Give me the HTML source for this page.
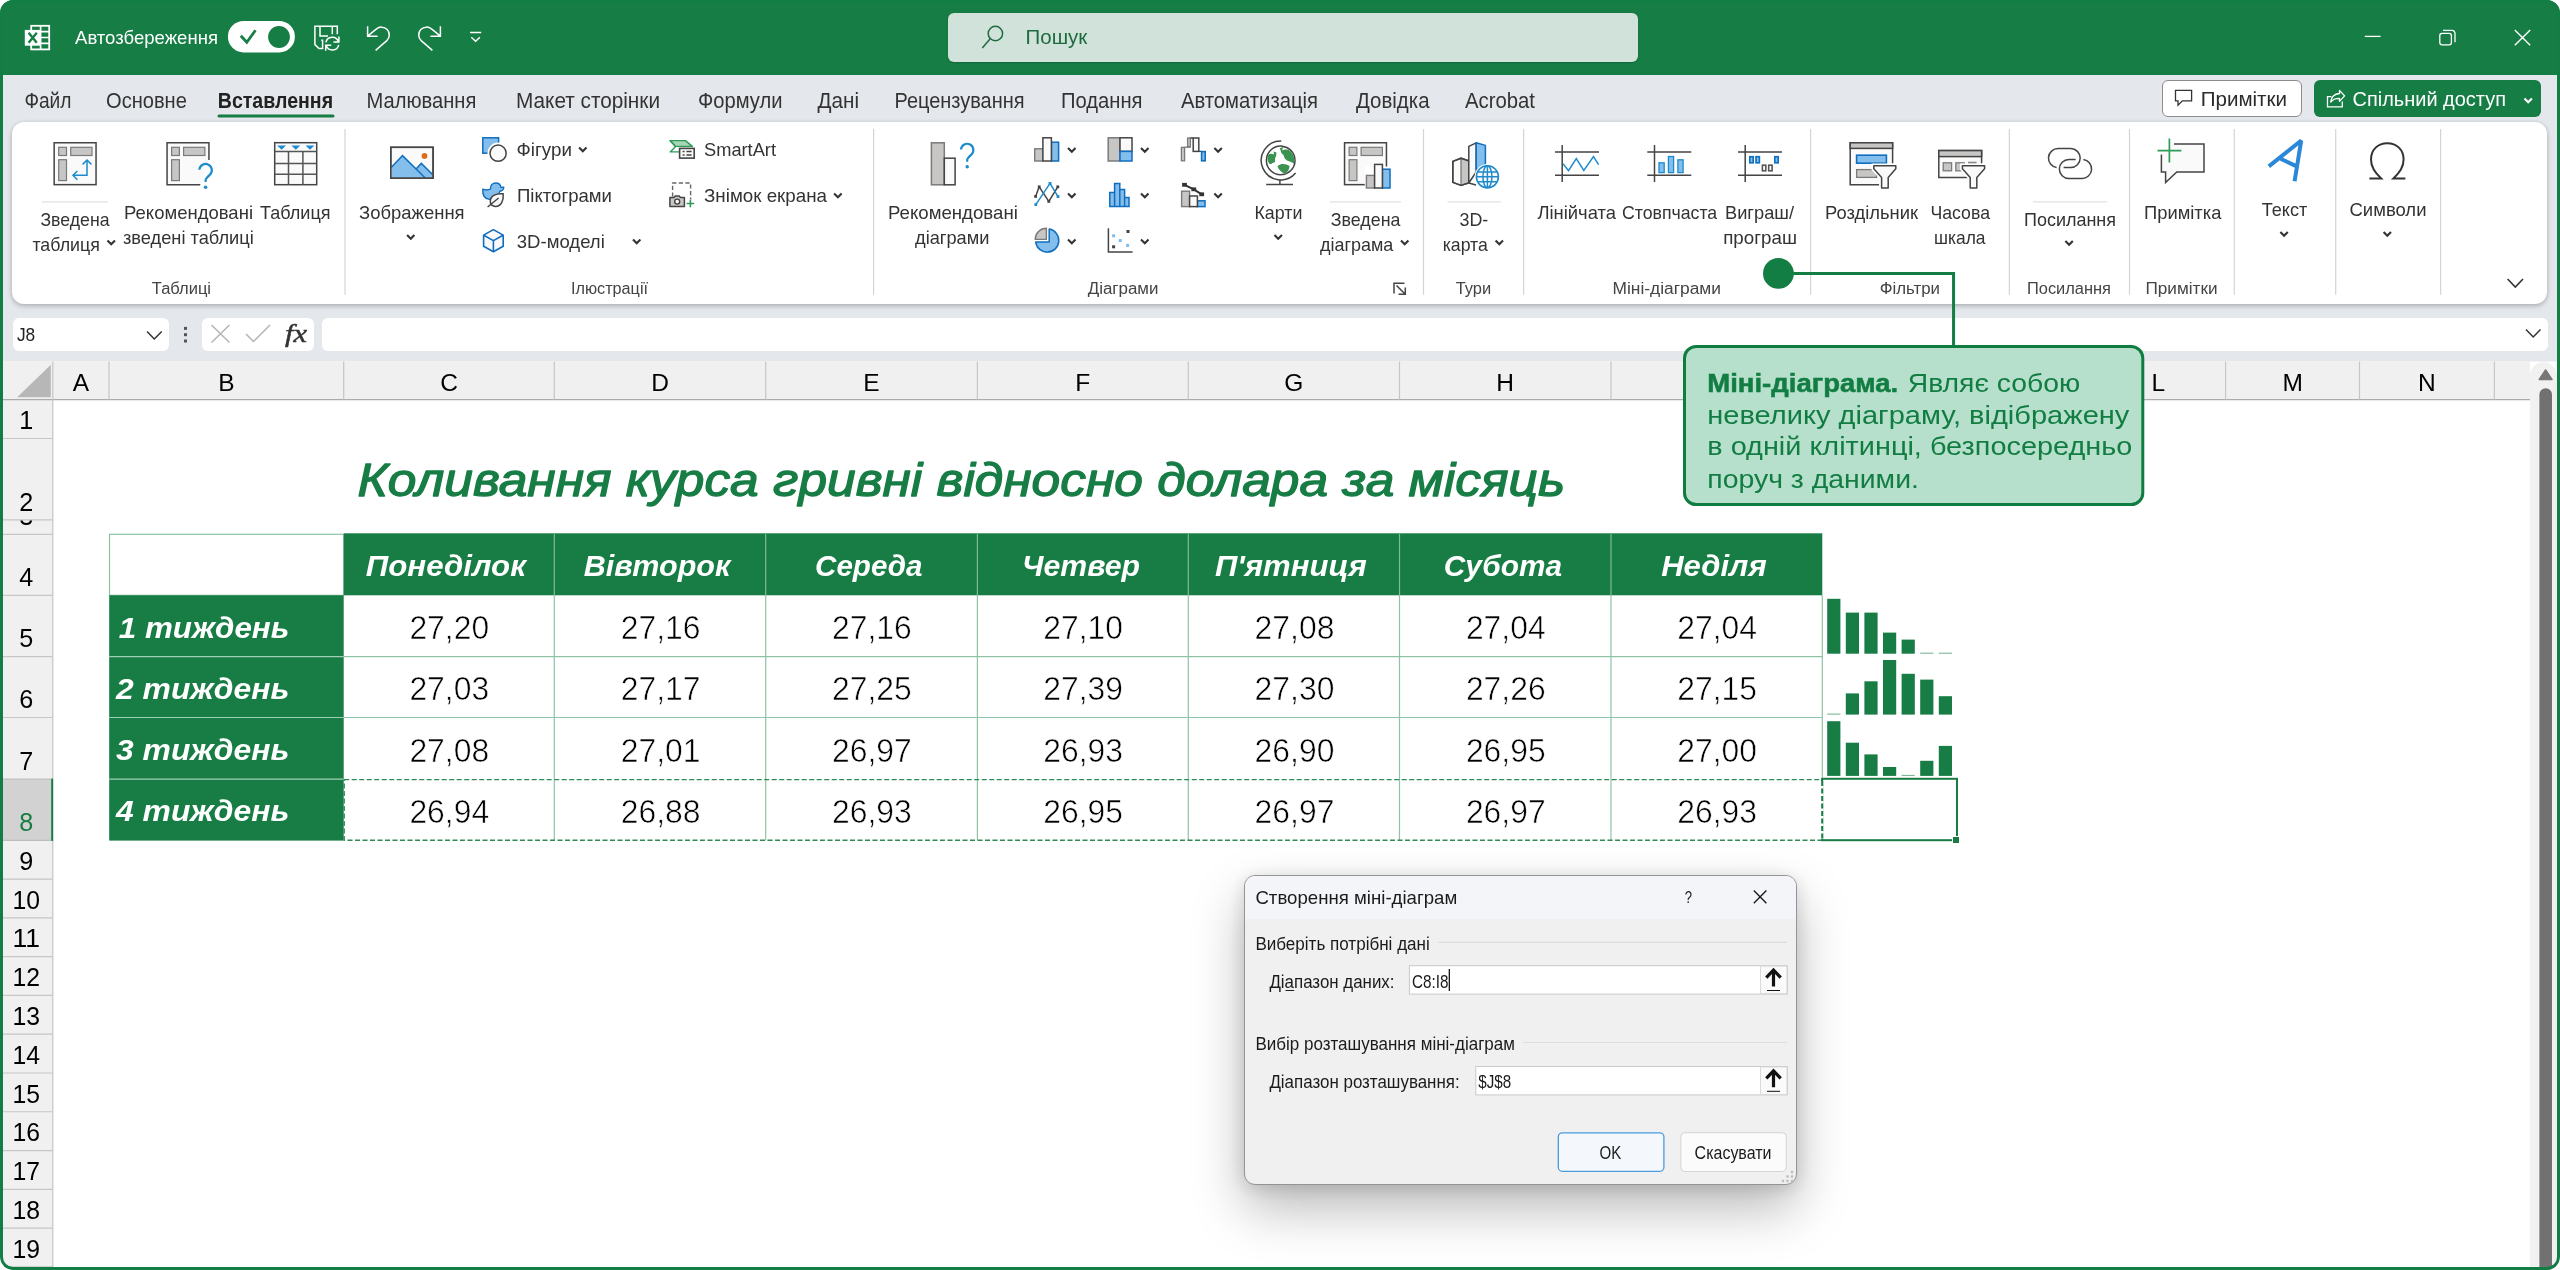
<!DOCTYPE html>
<html lang="uk"><head><meta charset="utf-8"><title>Excel</title>
<style>
html,body{margin:0;padding:0;background:#fff;}
body{width:2560px;height:1270px;position:relative;overflow:hidden;font-family:"Liberation Sans", "DejaVu Sans", sans-serif;}
#win{position:absolute;left:0;top:0;width:2560px;height:1270px;border-radius:13px;overflow:hidden;background:#fff;}
.a{position:absolute;}
svg{position:absolute;left:0;top:0;overflow:visible;will-change:transform;}
svg text{font-family:"Liberation Sans", "DejaVu Sans", sans-serif;white-space:pre;}
#frame{position:absolute;left:0;top:0;width:2560px;height:1270px;box-sizing:border-box;border:3px solid #127E43;border-radius:13px;pointer-events:none;}
</style></head>
<body>
<div id="win">
<div class="a" style="left:0;top:0;width:2560px;height:75px;background:#167D45"></div>
<div class="a" style="left:0;top:75px;width:2560px;height:287px;background:#E4E7EB"></div>
<div class="a" style="left:948px;top:13px;width:690px;height:49px;border-radius:6px;background:#D0E2D9;box-shadow:0 1px 2px rgba(0,0,0,.18)"></div>
<div class="a" style="left:2162px;top:79.5px;width:139.5px;height:37.5px;box-sizing:border-box;border:1px solid #8c8c8c;border-radius:6px;background:#fff"></div>
<div class="a" style="left:2314px;top:79.5px;width:227px;height:37.5px;border-radius:6px;background:#167D45"></div>
<div class="a" style="left:12px;top:122px;width:2535px;height:182px;border-radius:12px;background:#fff;box-shadow:0 1px 4px rgba(0,0,0,.22),0 3px 6px rgba(0,0,0,.08)"></div>
<div class="a" style="left:12.5px;top:317.5px;width:156.5px;height:33px;border-radius:6px;background:#fff"></div>
<div class="a" style="left:202px;top:317.5px;width:112px;height:33px;border-radius:6px;background:#fff"></div>
<div class="a" style="left:322px;top:317.5px;width:2225.5px;height:33px;border-radius:6px;background:#fff"></div>
<svg width="2560" height="1270" viewBox="0 0 2560 1270">
<rect x="3.00" y="361.50" width="2554.00" height="908.50" fill="#fff" />
<rect x="3.00" y="361.50" width="2527.00" height="38.00" fill="#F0F0F0" />
<rect x="3.00" y="361.50" width="50.00" height="908.50" fill="#F0F0F0" />
<rect x="3.00" y="779.50" width="50.00" height="60.60" fill="#D2D2D2" />
<line x1="3.00" y1="399.60" x2="2530.00" y2="399.60" stroke="#ABABAB" stroke-width="1.2" />
<line x1="52.80" y1="361.50" x2="52.80" y2="1270.00" stroke="#C6C6C6" stroke-width="1.2" />
<line x1="109.00" y1="361.50" x2="109.00" y2="399.50" stroke="#C6C6C6" stroke-width="1.2" />
<line x1="343.70" y1="361.50" x2="343.70" y2="399.50" stroke="#C6C6C6" stroke-width="1.2" />
<line x1="554.30" y1="361.50" x2="554.30" y2="399.50" stroke="#C6C6C6" stroke-width="1.2" />
<line x1="765.70" y1="361.50" x2="765.70" y2="399.50" stroke="#C6C6C6" stroke-width="1.2" />
<line x1="977.40" y1="361.50" x2="977.40" y2="399.50" stroke="#C6C6C6" stroke-width="1.2" />
<line x1="1188.30" y1="361.50" x2="1188.30" y2="399.50" stroke="#C6C6C6" stroke-width="1.2" />
<line x1="1399.50" y1="361.50" x2="1399.50" y2="399.50" stroke="#C6C6C6" stroke-width="1.2" />
<line x1="1611.00" y1="361.50" x2="1611.00" y2="399.50" stroke="#C6C6C6" stroke-width="1.2" />
<line x1="1822.30" y1="361.50" x2="1822.30" y2="399.50" stroke="#C6C6C6" stroke-width="1.2" />
<line x1="1957.00" y1="361.50" x2="1957.00" y2="399.50" stroke="#C6C6C6" stroke-width="1.2" />
<line x1="2091.00" y1="361.50" x2="2091.00" y2="399.50" stroke="#C6C6C6" stroke-width="1.2" />
<line x1="2225.60" y1="361.50" x2="2225.60" y2="399.50" stroke="#C6C6C6" stroke-width="1.2" />
<line x1="2359.50" y1="361.50" x2="2359.50" y2="399.50" stroke="#C6C6C6" stroke-width="1.2" />
<line x1="2494.40" y1="361.50" x2="2494.40" y2="399.50" stroke="#C6C6C6" stroke-width="1.2" />
<line x1="3.00" y1="438.50" x2="52.80" y2="438.50" stroke="#C6C6C6" stroke-width="1.2" />
<line x1="3.00" y1="519.80" x2="52.80" y2="519.80" stroke="#C6C6C6" stroke-width="1.2" />
<line x1="3.00" y1="534.30" x2="52.80" y2="534.30" stroke="#C6C6C6" stroke-width="1.2" />
<line x1="3.00" y1="595.30" x2="52.80" y2="595.30" stroke="#C6C6C6" stroke-width="1.2" />
<line x1="3.00" y1="656.60" x2="52.80" y2="656.60" stroke="#C6C6C6" stroke-width="1.2" />
<line x1="3.00" y1="717.50" x2="52.80" y2="717.50" stroke="#C6C6C6" stroke-width="1.2" />
<line x1="3.00" y1="879.08" x2="52.80" y2="879.08" stroke="#C6C6C6" stroke-width="1.2" />
<line x1="3.00" y1="917.86" x2="52.80" y2="917.86" stroke="#C6C6C6" stroke-width="1.2" />
<line x1="3.00" y1="956.64" x2="52.80" y2="956.64" stroke="#C6C6C6" stroke-width="1.2" />
<line x1="3.00" y1="995.42" x2="52.80" y2="995.42" stroke="#C6C6C6" stroke-width="1.2" />
<line x1="3.00" y1="1034.20" x2="52.80" y2="1034.20" stroke="#C6C6C6" stroke-width="1.2" />
<line x1="3.00" y1="1072.98" x2="52.80" y2="1072.98" stroke="#C6C6C6" stroke-width="1.2" />
<line x1="3.00" y1="1111.76" x2="52.80" y2="1111.76" stroke="#C6C6C6" stroke-width="1.2" />
<line x1="3.00" y1="1150.54" x2="52.80" y2="1150.54" stroke="#C6C6C6" stroke-width="1.2" />
<line x1="3.00" y1="1189.32" x2="52.80" y2="1189.32" stroke="#C6C6C6" stroke-width="1.2" />
<line x1="3.00" y1="1228.10" x2="52.80" y2="1228.10" stroke="#C6C6C6" stroke-width="1.2" />
<line x1="3.00" y1="1266.88" x2="52.80" y2="1266.88" stroke="#C6C6C6" stroke-width="1.2" />
<line x1="3.00" y1="779.20" x2="51.20" y2="779.20" stroke="#BDBDBD" stroke-width="1.2" />
<line x1="3.00" y1="840.30" x2="51.20" y2="840.30" stroke="#BDBDBD" stroke-width="1.2" />
<rect x="51.20" y="778.60" width="1.90" height="62.30" fill="#177D45" />
<path d="M50.8,364.8 V397.2 H17.2 Z" fill="#B7B7B7"/>
<text x="81.0" y="390.6" font-size="24.5" fill="#000" text-anchor="middle" >A</text>
<text x="226.3" y="390.6" font-size="24.5" fill="#000" text-anchor="middle" >B</text>
<text x="449.0" y="390.6" font-size="24.5" fill="#000" text-anchor="middle" >C</text>
<text x="660.0" y="390.6" font-size="24.5" fill="#000" text-anchor="middle" >D</text>
<text x="871.5" y="390.6" font-size="24.5" fill="#000" text-anchor="middle" >E</text>
<text x="1082.8" y="390.6" font-size="24.5" fill="#000" text-anchor="middle" >F</text>
<text x="1293.9" y="390.6" font-size="24.5" fill="#000" text-anchor="middle" >G</text>
<text x="1505.2" y="390.6" font-size="24.5" fill="#000" text-anchor="middle" >H</text>
<text x="1716.7" y="390.6" font-size="24.5" fill="#000" text-anchor="middle" >I</text>
<text x="1889.7" y="390.6" font-size="24.5" fill="#000" text-anchor="middle" >J</text>
<text x="2024.0" y="390.6" font-size="24.5" fill="#000" text-anchor="middle" >K</text>
<text x="2158.3" y="390.6" font-size="24.5" fill="#000" text-anchor="middle" >L</text>
<text x="2292.6" y="390.6" font-size="24.5" fill="#000" text-anchor="middle" >M</text>
<text x="2426.9" y="390.6" font-size="24.5" fill="#000" text-anchor="middle" >N</text>
<clipPath id="r3"><rect x="3" y="520.4" width="49" height="14"/></clipPath>
<text x="19.2" y="429.3" font-size="26" fill="#000" textLength="14.0" lengthAdjust="spacingAndGlyphs" >1</text>
<text x="19.2" y="510.6" font-size="26" fill="#000" textLength="14.0" lengthAdjust="spacingAndGlyphs" >2</text>
<text x="19.2" y="525.1" font-size="26" fill="#000" textLength="14.0" lengthAdjust="spacingAndGlyphs" clip-path="url(#r3)">3</text>
<text x="19.2" y="586.1" font-size="26" fill="#000" textLength="14.0" lengthAdjust="spacingAndGlyphs" >4</text>
<text x="19.2" y="647.4" font-size="26" fill="#000" textLength="14.0" lengthAdjust="spacingAndGlyphs" >5</text>
<text x="19.2" y="708.3" font-size="26" fill="#000" textLength="14.0" lengthAdjust="spacingAndGlyphs" >6</text>
<text x="19.2" y="770.0" font-size="26" fill="#000" textLength="14.0" lengthAdjust="spacingAndGlyphs" >7</text>
<text x="19.2" y="831.1" font-size="26" fill="#177D45" textLength="14.0" lengthAdjust="spacingAndGlyphs" >8</text>
<text x="19.2" y="869.9" font-size="26" fill="#000" textLength="14.0" lengthAdjust="spacingAndGlyphs" >9</text>
<text x="12.4" y="908.7" font-size="26" fill="#000" textLength="27.5" lengthAdjust="spacingAndGlyphs" >10</text>
<text x="12.4" y="947.4" font-size="26" fill="#000" textLength="27.5" lengthAdjust="spacingAndGlyphs" >11</text>
<text x="12.4" y="986.2" font-size="26" fill="#000" textLength="27.5" lengthAdjust="spacingAndGlyphs" >12</text>
<text x="12.4" y="1025.0" font-size="26" fill="#000" textLength="27.5" lengthAdjust="spacingAndGlyphs" >13</text>
<text x="12.4" y="1063.8" font-size="26" fill="#000" textLength="27.5" lengthAdjust="spacingAndGlyphs" >14</text>
<text x="12.4" y="1102.6" font-size="26" fill="#000" textLength="27.5" lengthAdjust="spacingAndGlyphs" >15</text>
<text x="12.4" y="1141.3" font-size="26" fill="#000" textLength="27.5" lengthAdjust="spacingAndGlyphs" >16</text>
<text x="12.4" y="1180.1" font-size="26" fill="#000" textLength="27.5" lengthAdjust="spacingAndGlyphs" >17</text>
<text x="12.4" y="1218.9" font-size="26" fill="#000" textLength="27.5" lengthAdjust="spacingAndGlyphs" >18</text>
<text x="12.4" y="1257.7" font-size="26" fill="#000" textLength="27.5" lengthAdjust="spacingAndGlyphs" >19</text>
<path d="M2530,1270 V376 a14,14 0 0 1 14,-14 h0 a14,14 0 0 1 13,14 V1270 Z" fill="#F1F1F1"/>
<path d="M2539.3,379.5 L2545.6,370 L2552,379.5 Z" fill="#777" stroke="#777" stroke-width="1.5" stroke-linejoin="round"/>
<path d="M2539.4,1270 V394.5 a6.3,6.3 0 0 1 12.6,0 V1270 Z" fill="#717171"/>
<text x="357.5" y="495.5" font-size="46.5" fill="#177D45" textLength="1207.5" lengthAdjust="spacingAndGlyphs" font-style="italic" stroke="#177D45" stroke-width="1.3" stroke-linejoin="round">Коливання курса гривні відносно долара за місяць</text>
<rect x="109.50" y="534.30" width="234.20" height="61.00" fill="#fff" stroke="#8FC3A5" stroke-width="1.2" />
<rect x="343.70" y="533.30" width="1478.60" height="62.00" fill="#177D45" />
<rect x="109.20" y="595.30" width="234.50" height="245.30" fill="#177D45" />
<line x1="554.30" y1="534.00" x2="554.30" y2="595.30" stroke="#7DBA98" stroke-width="1.2" />
<line x1="765.70" y1="534.00" x2="765.70" y2="595.30" stroke="#7DBA98" stroke-width="1.2" />
<line x1="977.40" y1="534.00" x2="977.40" y2="595.30" stroke="#7DBA98" stroke-width="1.2" />
<line x1="1188.30" y1="534.00" x2="1188.30" y2="595.30" stroke="#7DBA98" stroke-width="1.2" />
<line x1="1399.50" y1="534.00" x2="1399.50" y2="595.30" stroke="#7DBA98" stroke-width="1.2" />
<line x1="1611.00" y1="534.00" x2="1611.00" y2="595.30" stroke="#7DBA98" stroke-width="1.2" />
<line x1="109.20" y1="656.60" x2="343.70" y2="656.60" stroke="#9FD0B5" stroke-width="1.2" />
<line x1="109.20" y1="717.50" x2="343.70" y2="717.50" stroke="#9FD0B5" stroke-width="1.2" />
<line x1="109.20" y1="779.20" x2="343.70" y2="779.20" stroke="#9FD0B5" stroke-width="1.2" />
<line x1="343.70" y1="656.60" x2="1822.30" y2="656.60" stroke="#8FC3A5" stroke-width="1.2" />
<line x1="343.70" y1="717.50" x2="1822.30" y2="717.50" stroke="#8FC3A5" stroke-width="1.2" />
<line x1="554.30" y1="595.30" x2="554.30" y2="840.30" stroke="#8FC3A5" stroke-width="1.2" />
<line x1="765.70" y1="595.30" x2="765.70" y2="840.30" stroke="#8FC3A5" stroke-width="1.2" />
<line x1="977.40" y1="595.30" x2="977.40" y2="840.30" stroke="#8FC3A5" stroke-width="1.2" />
<line x1="1188.30" y1="595.30" x2="1188.30" y2="840.30" stroke="#8FC3A5" stroke-width="1.2" />
<line x1="1399.50" y1="595.30" x2="1399.50" y2="840.30" stroke="#8FC3A5" stroke-width="1.2" />
<line x1="1611.00" y1="595.30" x2="1611.00" y2="840.30" stroke="#8FC3A5" stroke-width="1.2" />
<line x1="1822.30" y1="595.30" x2="1822.30" y2="840.30" stroke="#8FC3A5" stroke-width="1.2" />
<rect x="344.20" y="779.60" width="1477.60" height="60.60" fill="none" stroke="#2E8B57" stroke-width="1.4" stroke-dasharray="5 2.5"/>
<text x="365.8" y="575.5" font-size="29.8" fill="#fff" textLength="160.2" lengthAdjust="spacingAndGlyphs" font-weight="bold" font-style="italic" >Понеділок</text>
<text x="583.8" y="575.5" font-size="29.8" fill="#fff" textLength="146.7" lengthAdjust="spacingAndGlyphs" font-weight="bold" font-style="italic" >Вівторок</text>
<text x="815.0" y="575.5" font-size="29.8" fill="#fff" textLength="107.5" lengthAdjust="spacingAndGlyphs" font-weight="bold" font-style="italic" >Середа</text>
<text x="1022.0" y="575.5" font-size="29.8" fill="#fff" textLength="118.0" lengthAdjust="spacingAndGlyphs" font-weight="bold" font-style="italic" >Четвер</text>
<text x="1215.0" y="575.5" font-size="29.8" fill="#fff" textLength="151.8" lengthAdjust="spacingAndGlyphs" font-weight="bold" font-style="italic" >П'ятниця</text>
<text x="1443.8" y="575.5" font-size="29.8" fill="#fff" textLength="118.2" lengthAdjust="spacingAndGlyphs" font-weight="bold" font-style="italic" >Субота</text>
<text x="1661.2" y="575.5" font-size="29.8" fill="#fff" textLength="105.5" lengthAdjust="spacingAndGlyphs" font-weight="bold" font-style="italic" >Неділя</text>
<text x="118.8" y="637.5" font-size="29.5" fill="#fff" textLength="170.6" lengthAdjust="spacingAndGlyphs" font-weight="bold" font-style="italic" >1 тиждень</text>
<text x="116.0" y="698.5" font-size="29.5" fill="#fff" textLength="173.4" lengthAdjust="spacingAndGlyphs" font-weight="bold" font-style="italic" >2 тиждень</text>
<text x="116.0" y="760.0" font-size="29.5" fill="#fff" textLength="173.4" lengthAdjust="spacingAndGlyphs" font-weight="bold" font-style="italic" >3 тиждень</text>
<text x="116.0" y="821.4" font-size="29.5" fill="#fff" textLength="173.4" lengthAdjust="spacingAndGlyphs" font-weight="bold" font-style="italic" >4 тиждень</text>
<text x="409.4" y="639.0" font-size="33" fill="#000" textLength="79.8" lengthAdjust="spacingAndGlyphs" stroke="#fff" stroke-width="0.6">27,20</text>
<text x="620.7" y="639.0" font-size="33" fill="#000" textLength="79.8" lengthAdjust="spacingAndGlyphs" stroke="#fff" stroke-width="0.6">27,16</text>
<text x="832.0" y="639.0" font-size="33" fill="#000" textLength="79.8" lengthAdjust="spacingAndGlyphs" stroke="#fff" stroke-width="0.6">27,16</text>
<text x="1043.3" y="639.0" font-size="33" fill="#000" textLength="79.8" lengthAdjust="spacingAndGlyphs" stroke="#fff" stroke-width="0.6">27,10</text>
<text x="1254.6" y="639.0" font-size="33" fill="#000" textLength="79.8" lengthAdjust="spacingAndGlyphs" stroke="#fff" stroke-width="0.6">27,08</text>
<text x="1465.9" y="639.0" font-size="33" fill="#000" textLength="79.8" lengthAdjust="spacingAndGlyphs" stroke="#fff" stroke-width="0.6">27,04</text>
<text x="1677.2" y="639.0" font-size="33" fill="#000" textLength="79.8" lengthAdjust="spacingAndGlyphs" stroke="#fff" stroke-width="0.6">27,04</text>
<text x="409.4" y="700.3" font-size="33" fill="#000" textLength="79.8" lengthAdjust="spacingAndGlyphs" stroke="#fff" stroke-width="0.6">27,03</text>
<text x="620.7" y="700.3" font-size="33" fill="#000" textLength="79.8" lengthAdjust="spacingAndGlyphs" stroke="#fff" stroke-width="0.6">27,17</text>
<text x="832.0" y="700.3" font-size="33" fill="#000" textLength="79.8" lengthAdjust="spacingAndGlyphs" stroke="#fff" stroke-width="0.6">27,25</text>
<text x="1043.3" y="700.3" font-size="33" fill="#000" textLength="79.8" lengthAdjust="spacingAndGlyphs" stroke="#fff" stroke-width="0.6">27,39</text>
<text x="1254.6" y="700.3" font-size="33" fill="#000" textLength="79.8" lengthAdjust="spacingAndGlyphs" stroke="#fff" stroke-width="0.6">27,30</text>
<text x="1465.9" y="700.3" font-size="33" fill="#000" textLength="79.8" lengthAdjust="spacingAndGlyphs" stroke="#fff" stroke-width="0.6">27,26</text>
<text x="1677.2" y="700.3" font-size="33" fill="#000" textLength="79.8" lengthAdjust="spacingAndGlyphs" stroke="#fff" stroke-width="0.6">27,15</text>
<text x="409.4" y="761.8" font-size="33" fill="#000" textLength="79.8" lengthAdjust="spacingAndGlyphs" stroke="#fff" stroke-width="0.6">27,08</text>
<text x="620.7" y="761.8" font-size="33" fill="#000" textLength="79.8" lengthAdjust="spacingAndGlyphs" stroke="#fff" stroke-width="0.6">27,01</text>
<text x="832.0" y="761.8" font-size="33" fill="#000" textLength="79.8" lengthAdjust="spacingAndGlyphs" stroke="#fff" stroke-width="0.6">26,97</text>
<text x="1043.3" y="761.8" font-size="33" fill="#000" textLength="79.8" lengthAdjust="spacingAndGlyphs" stroke="#fff" stroke-width="0.6">26,93</text>
<text x="1254.6" y="761.8" font-size="33" fill="#000" textLength="79.8" lengthAdjust="spacingAndGlyphs" stroke="#fff" stroke-width="0.6">26,90</text>
<text x="1465.9" y="761.8" font-size="33" fill="#000" textLength="79.8" lengthAdjust="spacingAndGlyphs" stroke="#fff" stroke-width="0.6">26,95</text>
<text x="1677.2" y="761.8" font-size="33" fill="#000" textLength="79.8" lengthAdjust="spacingAndGlyphs" stroke="#fff" stroke-width="0.6">27,00</text>
<text x="409.4" y="823.3" font-size="33" fill="#000" textLength="79.8" lengthAdjust="spacingAndGlyphs" stroke="#fff" stroke-width="0.6">26,94</text>
<text x="620.7" y="823.3" font-size="33" fill="#000" textLength="79.8" lengthAdjust="spacingAndGlyphs" stroke="#fff" stroke-width="0.6">26,88</text>
<text x="832.0" y="823.3" font-size="33" fill="#000" textLength="79.8" lengthAdjust="spacingAndGlyphs" stroke="#fff" stroke-width="0.6">26,93</text>
<text x="1043.3" y="823.3" font-size="33" fill="#000" textLength="79.8" lengthAdjust="spacingAndGlyphs" stroke="#fff" stroke-width="0.6">26,95</text>
<text x="1254.6" y="823.3" font-size="33" fill="#000" textLength="79.8" lengthAdjust="spacingAndGlyphs" stroke="#fff" stroke-width="0.6">26,97</text>
<text x="1465.9" y="823.3" font-size="33" fill="#000" textLength="79.8" lengthAdjust="spacingAndGlyphs" stroke="#fff" stroke-width="0.6">26,97</text>
<text x="1677.2" y="823.3" font-size="33" fill="#000" textLength="79.8" lengthAdjust="spacingAndGlyphs" stroke="#fff" stroke-width="0.6">26,93</text>
<rect x="1827.20" y="598.80" width="13.20" height="54.90" fill="#177D45" />
<rect x="1845.80" y="612.60" width="13.20" height="41.10" fill="#177D45" />
<rect x="1864.40" y="612.60" width="13.20" height="41.10" fill="#177D45" />
<rect x="1883.00" y="632.60" width="13.20" height="21.10" fill="#177D45" />
<rect x="1901.60" y="639.60" width="13.20" height="14.10" fill="#177D45" />
<rect x="1920.20" y="652.70" width="13.20" height="1.00" fill="#6FB08C" />
<rect x="1938.80" y="652.70" width="13.20" height="1.00" fill="#6FB08C" />
<rect x="1827.20" y="713.60" width="13.20" height="1.00" fill="#6FB08C" />
<rect x="1845.80" y="693.40" width="13.20" height="21.20" fill="#177D45" />
<rect x="1864.40" y="681.30" width="13.20" height="33.30" fill="#177D45" />
<rect x="1883.00" y="660.00" width="13.20" height="54.60" fill="#177D45" />
<rect x="1901.60" y="673.80" width="13.20" height="40.80" fill="#177D45" />
<rect x="1920.20" y="679.60" width="13.20" height="35.00" fill="#177D45" />
<rect x="1938.80" y="696.20" width="13.20" height="18.40" fill="#177D45" />
<rect x="1827.20" y="721.20" width="13.20" height="54.70" fill="#177D45" />
<rect x="1845.80" y="742.70" width="13.20" height="33.20" fill="#177D45" />
<rect x="1864.40" y="754.40" width="13.20" height="21.50" fill="#177D45" />
<rect x="1883.00" y="767.00" width="13.20" height="8.90" fill="#177D45" />
<rect x="1901.60" y="774.90" width="13.20" height="1.00" fill="#6FB08C" />
<rect x="1920.20" y="760.80" width="13.20" height="15.10" fill="#177D45" />
<rect x="1938.80" y="745.90" width="13.20" height="30.00" fill="#177D45" />
<rect x="1822.20" y="778.80" width="134.80" height="61.40" fill="#fff" stroke="#177D45" stroke-width="2" />
<line x1="1822.20" y1="781.00" x2="1822.20" y2="839.00" stroke="#fff" stroke-width="2.4" />
<line x1="1822.20" y1="781.00" x2="1822.20" y2="839.00" stroke="#177D45" stroke-width="2" stroke-dasharray="5 2.5"/>
<rect x="1952.50" y="836.50" width="7.00" height="7.00" fill="#177D45" stroke="#fff" stroke-width="1" />
<text x="75.0" y="43.7" font-size="19" fill="#fff" textLength="143.0" lengthAdjust="spacingAndGlyphs" >Автозбереження</text>
<text x="1025.6" y="44.4" font-size="19.5" fill="#1D6B3F" textLength="61.7" lengthAdjust="spacingAndGlyphs" >Пошук</text>
<text x="24.4" y="107.6" font-size="21.5" fill="#333" textLength="47.1" lengthAdjust="spacingAndGlyphs" >Файл</text>
<text x="106.0" y="107.6" font-size="21.5" fill="#333" textLength="80.9" lengthAdjust="spacingAndGlyphs" >Основне</text>
<text x="366.6" y="107.6" font-size="21.5" fill="#333" textLength="109.7" lengthAdjust="spacingAndGlyphs" >Малювання</text>
<text x="516.0" y="107.6" font-size="21.5" fill="#333" textLength="144.0" lengthAdjust="spacingAndGlyphs" >Макет сторінки</text>
<text x="698.0" y="107.6" font-size="21.5" fill="#333" textLength="84.5" lengthAdjust="spacingAndGlyphs" >Формули</text>
<text x="817.5" y="107.6" font-size="21.5" fill="#333" textLength="41.5" lengthAdjust="spacingAndGlyphs" >Дані</text>
<text x="894.5" y="107.6" font-size="21.5" fill="#333" textLength="130.0" lengthAdjust="spacingAndGlyphs" >Рецензування</text>
<text x="1061.0" y="107.6" font-size="21.5" fill="#333" textLength="81.5" lengthAdjust="spacingAndGlyphs" >Подання</text>
<text x="1181.0" y="107.6" font-size="21.5" fill="#333" textLength="137.0" lengthAdjust="spacingAndGlyphs" >Автоматизація</text>
<text x="1356.0" y="107.6" font-size="21.5" fill="#333" textLength="73.5" lengthAdjust="spacingAndGlyphs" >Довідка</text>
<text x="1465.0" y="107.6" font-size="21.5" fill="#333" textLength="70.0" lengthAdjust="spacingAndGlyphs" >Acrobat</text>
<text x="217.8" y="107.6" font-size="21.5" fill="#222" textLength="115.3" lengthAdjust="spacingAndGlyphs" font-weight="bold" >Вставлення</text>
<rect x="217.50" y="114.50" width="117.00" height="3.00" fill="#167D45" rx="1.5" />
<text x="2200.7" y="105.8" font-size="20.5" fill="#2b2b2b" textLength="86.3" lengthAdjust="spacingAndGlyphs" >Примітки</text>
<text x="2352.5" y="105.8" font-size="20.5" fill="#fff" textLength="153.5" lengthAdjust="spacingAndGlyphs" >Спільний доступ</text>
<path d="M2524.5,98.6 L2528.2,102.3 L2531.9,98.6" fill="none" stroke="#fff" stroke-width="2.1" stroke-linecap="butt" stroke-linejoin="miter"/>
<text x="40.4" y="225.5" font-size="19" fill="#333" textLength="69.1" lengthAdjust="spacingAndGlyphs" >Зведена</text>
<text x="32.4" y="250.6" font-size="19" fill="#333" textLength="67.4" lengthAdjust="spacingAndGlyphs" >таблиця</text>
<text x="124.0" y="219.0" font-size="19" fill="#333" textLength="129.0" lengthAdjust="spacingAndGlyphs" >Рекомендовані</text>
<text x="123.0" y="244.0" font-size="19" fill="#333" textLength="130.8" lengthAdjust="spacingAndGlyphs" >зведені таблиці</text>
<text x="260.0" y="219.0" font-size="19" fill="#333" textLength="70.6" lengthAdjust="spacingAndGlyphs" >Таблиця</text>
<text x="359.0" y="218.7" font-size="19" fill="#333" textLength="105.6" lengthAdjust="spacingAndGlyphs" >Зображення</text>
<text x="516.5" y="156.3" font-size="19" fill="#333" textLength="55.4" lengthAdjust="spacingAndGlyphs" >Фігури</text>
<text x="517.0" y="202.3" font-size="19" fill="#333" textLength="95.0" lengthAdjust="spacingAndGlyphs" >Піктограми</text>
<text x="516.8" y="247.9" font-size="19" fill="#333" textLength="88.0" lengthAdjust="spacingAndGlyphs" >3D-моделі</text>
<text x="704.0" y="156.3" font-size="19" fill="#333" textLength="72.0" lengthAdjust="spacingAndGlyphs" >SmartArt</text>
<text x="704.0" y="202.3" font-size="19" fill="#333" textLength="123.0" lengthAdjust="spacingAndGlyphs" >Знімок екрана</text>
<text x="888.0" y="219.0" font-size="19" fill="#333" textLength="129.8" lengthAdjust="spacingAndGlyphs" >Рекомендовані</text>
<text x="915.0" y="244.0" font-size="19" fill="#333" textLength="74.4" lengthAdjust="spacingAndGlyphs" >діаграми</text>
<text x="1254.5" y="219.0" font-size="19" fill="#333" textLength="47.9" lengthAdjust="spacingAndGlyphs" >Карти</text>
<text x="1330.8" y="225.5" font-size="19" fill="#333" textLength="69.6" lengthAdjust="spacingAndGlyphs" >Зведена</text>
<text x="1320.0" y="250.6" font-size="19" fill="#333" textLength="73.3" lengthAdjust="spacingAndGlyphs" >діаграма</text>
<text x="1459.5" y="225.5" font-size="19" fill="#333" textLength="28.8" lengthAdjust="spacingAndGlyphs" >3D-</text>
<text x="1442.7" y="250.6" font-size="19" fill="#333" textLength="45.2" lengthAdjust="spacingAndGlyphs" >карта</text>
<text x="1537.4" y="219.0" font-size="19" fill="#333" textLength="78.6" lengthAdjust="spacingAndGlyphs" >Лінійчата</text>
<text x="1622.0" y="219.0" font-size="19" fill="#333" textLength="95.2" lengthAdjust="spacingAndGlyphs" >Стовпчаста</text>
<text x="1725.0" y="219.0" font-size="19" fill="#333" textLength="69.0" lengthAdjust="spacingAndGlyphs" >Виграш/</text>
<text x="1723.2" y="244.0" font-size="19" fill="#333" textLength="73.8" lengthAdjust="spacingAndGlyphs" >програш</text>
<text x="1825.0" y="219.0" font-size="19" fill="#333" textLength="93.0" lengthAdjust="spacingAndGlyphs" >Роздільник</text>
<text x="1930.4" y="219.0" font-size="19" fill="#333" textLength="59.6" lengthAdjust="spacingAndGlyphs" >Часова</text>
<text x="1934.0" y="244.0" font-size="19" fill="#333" textLength="51.5" lengthAdjust="spacingAndGlyphs" >шкала</text>
<text x="2024.0" y="225.5" font-size="19" fill="#333" textLength="92.0" lengthAdjust="spacingAndGlyphs" >Посилання</text>
<text x="2144.0" y="218.8" font-size="19" fill="#333" textLength="77.4" lengthAdjust="spacingAndGlyphs" >Примітка</text>
<text x="2261.8" y="216.3" font-size="19" fill="#333" textLength="45.5" lengthAdjust="spacingAndGlyphs" >Текст</text>
<text x="2349.5" y="216.3" font-size="19" fill="#333" textLength="77.0" lengthAdjust="spacingAndGlyphs" >Символи</text>
<text x="151.8" y="294.3" font-size="16" fill="#444" textLength="59.2" lengthAdjust="spacingAndGlyphs" >Таблиці</text>
<text x="571.0" y="294.3" font-size="16" fill="#444" textLength="77.0" lengthAdjust="spacingAndGlyphs" >Ілюстрації</text>
<text x="1087.7" y="294.3" font-size="16" fill="#444" textLength="70.7" lengthAdjust="spacingAndGlyphs" >Діаграми</text>
<text x="1455.7" y="294.3" font-size="16" fill="#444" textLength="35.5" lengthAdjust="spacingAndGlyphs" >Тури</text>
<text x="1612.5" y="294.3" font-size="16" fill="#444" textLength="108.5" lengthAdjust="spacingAndGlyphs" >Міні-діаграми</text>
<text x="1879.7" y="294.3" font-size="16" fill="#444" textLength="60.3" lengthAdjust="spacingAndGlyphs" >Фільтри</text>
<text x="2027.0" y="294.3" font-size="16" fill="#444" textLength="84.0" lengthAdjust="spacingAndGlyphs" >Посилання</text>
<text x="2145.4" y="294.3" font-size="16" fill="#444" textLength="72.1" lengthAdjust="spacingAndGlyphs" >Примітки</text>
<path d="M107.5,240.6 L111.2,244.3 L115.0,240.6" fill="none" stroke="#333" stroke-width="2.1" stroke-linecap="butt" stroke-linejoin="miter"/>
<path d="M407.1,235.0 L410.8,238.7 L414.4,235.0" fill="none" stroke="#333" stroke-width="2.1" stroke-linecap="butt" stroke-linejoin="miter"/>
<path d="M579.1,147.6 L582.8,151.3 L586.5,147.6" fill="none" stroke="#333" stroke-width="2.1" stroke-linecap="butt" stroke-linejoin="miter"/>
<path d="M633.0,239.6 L636.7,243.3 L640.4,239.6" fill="none" stroke="#333" stroke-width="2.1" stroke-linecap="butt" stroke-linejoin="miter"/>
<path d="M834.1,193.6 L837.9,197.3 L841.6,193.6" fill="none" stroke="#333" stroke-width="2.1" stroke-linecap="butt" stroke-linejoin="miter"/>
<path d="M1068.0,148.1 L1071.8,151.8 L1075.5,148.1" fill="none" stroke="#333" stroke-width="2.1" stroke-linecap="butt" stroke-linejoin="miter"/>
<path d="M1068.0,193.6 L1071.8,197.3 L1075.5,193.6" fill="none" stroke="#333" stroke-width="2.1" stroke-linecap="butt" stroke-linejoin="miter"/>
<path d="M1068.0,239.6 L1071.8,243.3 L1075.5,239.6" fill="none" stroke="#333" stroke-width="2.1" stroke-linecap="butt" stroke-linejoin="miter"/>
<path d="M1141.0,148.1 L1144.8,151.8 L1148.5,148.1" fill="none" stroke="#333" stroke-width="2.1" stroke-linecap="butt" stroke-linejoin="miter"/>
<path d="M1141.0,193.6 L1144.8,197.3 L1148.5,193.6" fill="none" stroke="#333" stroke-width="2.1" stroke-linecap="butt" stroke-linejoin="miter"/>
<path d="M1141.0,239.6 L1144.8,243.3 L1148.5,239.6" fill="none" stroke="#333" stroke-width="2.1" stroke-linecap="butt" stroke-linejoin="miter"/>
<path d="M1214.4,148.1 L1218.1,151.8 L1221.8,148.1" fill="none" stroke="#333" stroke-width="2.1" stroke-linecap="butt" stroke-linejoin="miter"/>
<path d="M1214.4,193.6 L1218.1,197.3 L1221.8,193.6" fill="none" stroke="#333" stroke-width="2.1" stroke-linecap="butt" stroke-linejoin="miter"/>
<path d="M1274.5,235.1 L1278.2,238.8 L1282.0,235.1" fill="none" stroke="#333" stroke-width="2.1" stroke-linecap="butt" stroke-linejoin="miter"/>
<path d="M1401.0,240.6 L1404.7,244.3 L1408.4,240.6" fill="none" stroke="#333" stroke-width="2.1" stroke-linecap="butt" stroke-linejoin="miter"/>
<path d="M1495.6,240.6 L1499.3,244.3 L1503.0,240.6" fill="none" stroke="#333" stroke-width="2.1" stroke-linecap="butt" stroke-linejoin="miter"/>
<path d="M2065.4,241.0 L2069.1,244.7 L2072.8,241.0" fill="none" stroke="#333" stroke-width="2.1" stroke-linecap="butt" stroke-linejoin="miter"/>
<path d="M2280.4,232.0 L2284.1,235.7 L2287.8,232.0" fill="none" stroke="#333" stroke-width="2.1" stroke-linecap="butt" stroke-linejoin="miter"/>
<path d="M2383.6,232.0 L2387.3,235.7 L2391.0,232.0" fill="none" stroke="#333" stroke-width="2.1" stroke-linecap="butt" stroke-linejoin="miter"/>
<path d="M2507.6,279.0 L2515.3,287.0 L2523.0,279.0" fill="none" stroke="#333" stroke-width="1.6" stroke-linecap="butt" stroke-linejoin="miter"/>
<line x1="345.00" y1="129.00" x2="345.00" y2="294.70" stroke="#D4D4D4" stroke-width="1.2" />
<line x1="873.60" y1="129.00" x2="873.60" y2="294.70" stroke="#D4D4D4" stroke-width="1.2" />
<line x1="1423.50" y1="129.00" x2="1423.50" y2="294.70" stroke="#D4D4D4" stroke-width="1.2" />
<line x1="1523.60" y1="129.00" x2="1523.60" y2="294.70" stroke="#D4D4D4" stroke-width="1.2" />
<line x1="1810.60" y1="129.00" x2="1810.60" y2="294.70" stroke="#D4D4D4" stroke-width="1.2" />
<line x1="2009.40" y1="129.00" x2="2009.40" y2="294.70" stroke="#D4D4D4" stroke-width="1.2" />
<line x1="2129.50" y1="129.00" x2="2129.50" y2="294.70" stroke="#D4D4D4" stroke-width="1.2" />
<line x1="2234.30" y1="129.00" x2="2234.30" y2="294.70" stroke="#D4D4D4" stroke-width="1.2" />
<line x1="2335.70" y1="129.00" x2="2335.70" y2="294.70" stroke="#D4D4D4" stroke-width="1.2" />
<line x1="2440.60" y1="129.00" x2="2440.60" y2="294.70" stroke="#D4D4D4" stroke-width="1.2" />
<line x1="42.00" y1="201.80" x2="108.00" y2="201.80" stroke="#E1E1E1" stroke-width="1.2" />
<line x1="1330.00" y1="201.80" x2="1401.00" y2="201.80" stroke="#E1E1E1" stroke-width="1.2" />
<line x1="1447.50" y1="201.80" x2="1501.00" y2="201.80" stroke="#E1E1E1" stroke-width="1.2" />
<line x1="2033.00" y1="201.80" x2="2107.00" y2="201.80" stroke="#E1E1E1" stroke-width="1.2" />
<path d="M1394,293.5 V283.2 H1404.5 M1396.5,285.5 L1405.3,294.3 M1398.5,294.3 H1405.3 V287.5" fill="none" stroke="#444" stroke-width="1.5"/>
<text x="16.9" y="341.4" font-size="19" fill="#222" textLength="18.3" lengthAdjust="spacingAndGlyphs" >J8</text>
<path d="M147.0,331.5 L154.3,339.0 L161.7,331.5" fill="none" stroke="#333" stroke-width="1.5" stroke-linecap="butt" stroke-linejoin="miter"/>
<rect x="184.00" y="326.90" width="3.00" height="3.00" fill="#555" />
<rect x="184.00" y="333.20" width="3.00" height="3.00" fill="#555" />
<rect x="184.00" y="339.50" width="3.00" height="3.00" fill="#555" />
<path d="M211.5,325 L229.5,342.5 M229.5,325 L211.5,342.5" stroke="#b4b4b4" stroke-width="1.5" fill="none"/>
<path d="M246,334 L253.5,341.5 L270,325" stroke="#b4b4b4" stroke-width="1.5" fill="none"/>
<text x="285.0" y="342.0" font-size="26" fill="#333" textLength="22.0" lengthAdjust="spacingAndGlyphs" font-style="italic" style='font-family:"Liberation Serif", "DejaVu Serif", serif' stroke="#333" stroke-width="0.5">fx</text>
<path d="M2526.0,329.5 L2533.2,337.0 L2540.5,329.5" fill="none" stroke="#333" stroke-width="1.5" stroke-linecap="butt" stroke-linejoin="miter"/>
<rect x="31.20" y="25.80" width="18.00" height="23.60" fill="none" stroke="#fff" stroke-width="1.8" />
<path d="M40.6,25.8 V49.4 M40.6,31.6 H49.2 M40.6,37.5 H49.2 M40.6,43.4 H49.2 M31.2,31.6 H35 M31.2,43.4 H35" fill="none" stroke="#fff" stroke-width="1.7" />
<rect x="24.80" y="29.90" width="15.80" height="15.80" fill="#fff" />
<path d="M28.6,32.8 L36.8,42.8 M36.8,32.8 L28.6,42.8" fill="none" stroke="#167D45" stroke-width="2.4" />
<rect x="227.90" y="20.90" width="67.00" height="31.50" fill="#fff" rx="15.75" />
<path d="M240.8,35.7 L246.8,42.3 L255.5,30.2" fill="none" stroke="#167D45" stroke-width="2.8" />
<circle cx="279" cy="37" r="10.9" fill="#167D45"/>
<path d="M337.3,34.2 V26.2 H314.9 V44.6 L319,48.6 H322.6 V40.2 H321.2" fill="none" stroke="#fff" stroke-width="1.5" />
<path d="M320,26.4 V36 H328 M332.3,26.4 V34.2" fill="none" stroke="#fff" stroke-width="1.5" />
<path d="M325.9,42.4 A6.5,6.5 0 0 1 338.4,41.6 M338.9,36.6 V42.1 H333.4 M338.7,44.8 A6.5,6.5 0 0 1 326.2,45.6 M325.7,50.7 V45.2 H331.2" fill="none" stroke="#fff" stroke-width="1.5" />
<path d="M367.6,26.2 V36.2 H377.6 M367.6,36.2 L376.2,29.2 A7.5,7.5 0 0 1 386.8,40.6 L375.6,50.4" fill="none" stroke="#fff" stroke-width="1.5" />
<path d="M440.4,26.2 V36.2 H430.4 M440.4,36.2 L431.8,29.2 A7.5,7.5 0 0 0 421.2,40.6 L432.4,50.4" fill="none" stroke="#fff" stroke-width="1.5" />
<path d="M470,32.4 H481.2 M471.3,37.2 L475.6,41.3 L479.9,37.2" fill="none" stroke="#fff" stroke-width="1.5" />
<circle cx="995.4" cy="33.5" r="7.2" fill="none" stroke="#1D6B3F" stroke-width="1.5"/>
<path d="M990.2,38.8 L982.3,48" fill="none" stroke="#1D6B3F" stroke-width="1.5" />
<path d="M2364.8,36.4 H2380.6" fill="none" stroke="#fff" stroke-width="1.3" />
<rect x="2439.80" y="33.40" width="11.60" height="11.40" fill="none" stroke="#fff" stroke-width="1.3" rx="2.2" />
<path d="M2443,30.4 H2452 A3,3 0 0 1 2455,33.4 V42.2" fill="none" stroke="#fff" stroke-width="1.3" />
<path d="M2514.8,30 L2530.2,45.2 M2530.2,30 L2514.8,45.2" fill="none" stroke="#fff" stroke-width="1.4" />
<path d="M2175.5,90.4 H2191.6 V100.9 H2182.4 L2178,105.3 V100.9 H2175.5 Z" fill="none" stroke="#333" stroke-width="1.3" />
<path d="M2331.5,96.6 H2327.5 V106.8 H2342.3 V101.4" fill="none" stroke="#fff" stroke-width="1.3" />
<path d="M2339.5,90.4 L2344.6,95.9 L2339.5,101.4 V98.3 C2335.5,98.2 2332.8,99.3 2330.7,102 C2331.2,97.3 2334.3,94 2339.5,93.5 Z" fill="none" stroke="#fff" stroke-width="1.3" stroke-linejoin="round"/>
<rect x="54.15" y="142.75" width="41.90" height="41.90" fill="#FAFAFA" stroke="#444444" stroke-width="1.5" /><rect x="58.70" y="147.30" width="7.80" height="8.20" fill="#C8C6C4" stroke="#7A7A7A" stroke-width="1.2" /><rect x="70.70" y="147.30" width="21.30" height="8.20" fill="#C8C6C4" stroke="#7A7A7A" stroke-width="1.2" /><rect x="58.70" y="159.70" width="7.80" height="20.90" fill="#C8C6C4" stroke="#7A7A7A" stroke-width="1.2" />
<path d="M87,160.2 V175.3 H73.2 M82.6,164.4 L87,160 L91.4,164.4 M77.4,171 L73,175.3 L77.4,179.7" fill="none" stroke="#1E8BCD" stroke-width="1.5" />
<path d="M208.95000000000002,160 V142.75 H167.05 V184.65 H200.3" fill="#FAFAFA" stroke="#444444" stroke-width="1.5" /><rect x="171.60" y="147.30" width="7.80" height="8.20" fill="#C8C6C4" stroke="#7A7A7A" stroke-width="1.2" /><rect x="183.60" y="147.30" width="21.30" height="8.20" fill="#C8C6C4" stroke="#7A7A7A" stroke-width="1.2" /><rect x="171.60" y="159.70" width="7.80" height="20.90" fill="#C8C6C4" stroke="#7A7A7A" stroke-width="1.2" />
<path d="M199.35,169.75 A6.25,6.25 0 1 1 209.48,175.13 Q205.60,178.81 205.60,179.96 V182.08" fill="none" stroke="#1E8BCD" stroke-width="2.2"/><circle cx="205.60" cy="187.14" r="1.76" fill="#1E8BCD"/>
<rect x="274.70" y="142.70" width="42.00" height="42.00" fill="#FAFAFA" stroke="#444444" stroke-width="1.5" />
<path d="M274.7,151.5 H316.7 M274.7,163.4 H316.7 M274.7,174.3 H316.7 M288.5,151.5 V184.7 M302.9,151.5 V184.7" fill="none" stroke="#555" stroke-width="1.5" />
<path d="M277.20000000000005,145.4 H286.0 L281.6,149.8 Z" fill="#1E8BCD" />
<path d="M291.40000000000003,145.4 H300.2 L295.8,149.8 Z" fill="#1E8BCD" />
<path d="M305.6,145.4 H314.4 L310,149.8 Z" fill="#1E8BCD" />
<rect x="390.80" y="147.30" width="42.30" height="30.80" fill="#FAFAFA" stroke="#444444" stroke-width="1.5" />
<path d="M391.5,167.3 L402.5,155.6 L424.8,177.5 H391.5 Z" fill="#83BEEC" />
<path d="M416.3,168.6 L421.3,163.4 L432.4,174.4 V177.5 H425 Z" fill="#83BEEC" />
<path d="M391.2,167.5 L402.5,155.6 L425,177.8 M416.3,168.8 L421.3,163.4 L432.8,174.8" fill="none" stroke="#106EBE" stroke-width="1.5" />
<circle cx="424.5" cy="155.9" r="2.9" fill="#DC6B19"/>
<rect x="390.80" y="147.30" width="42.30" height="30.80" fill="none" stroke="#444444" stroke-width="1.5" />
<rect x="482.80" y="137.80" width="15.80" height="15.40" fill="#83BEEC" stroke="#106EBE" stroke-width="1.5" />
<circle cx="498.1" cy="153.2" r="10.6" fill="#fff"/>
<circle cx="498.1" cy="153.2" r="8.1" fill="#FAFAFA" stroke="#444444" stroke-width="1.5"/>
<path d="M482.8,189.2 C485.5,190.3 488,190.2 490.6,188.9 C490,185.4 492.5,183 495.7,183 C498.6,183 500.6,185 500.8,187.4 L503.8,187.2 C503.6,189.6 502,191 499.8,191.3 C499.4,193 498.4,194.3 497,195.2 L489.5,199.4 C485,198.8 482.4,195 482.8,189.2 Z" fill="#83BEEC" stroke="#106EBE" stroke-width="1.4" stroke-linejoin="round"/>
<path d="M503.2,193.8 C496.5,193 490.5,195.6 490.3,201.3 C490.2,204.6 492.6,206.5 495.6,206.4 C500.8,206.2 503.8,201.2 503.2,193.8 Z" fill="#FAFAFA" stroke="#444444" stroke-width="1.5" stroke-linejoin="round"/>
<path d="M487.6,207 L498.6,198" fill="none" stroke="#444444" stroke-width="1.5" />
<path d="M493.4,229.6 L503.2,235.1 V246.3 L493.4,251.8 L483.6,246.3 V235.1 Z" fill="#FAFAFA" stroke="#106EBE" stroke-width="1.6" stroke-linejoin="round"/>
<path d="M483.8,235.2 L493.4,240.6 L503,235.2 M493.4,240.6 V251.6" fill="none" stroke="#106EBE" stroke-width="1.6" />
<path d="M670,140.6 H685.4 L692.4,146.4 H675.6 Z" fill="#A7D7B8" stroke="#2E9B57" stroke-width="1.4" stroke-linejoin="round"/>
<path d="M670,140.6 L675.6,146.4 L670.2,151.9 H679.4" fill="none" stroke="#2E9B57" stroke-width="1.4" stroke-linejoin="round"/>
<rect x="679.60" y="148.40" width="14.60" height="9.70" fill="#FAFAFA" stroke="#444444" stroke-width="1.6" />
<path d="M682.6,151.6 H684.6 M686.4,151.6 H691.6 M682.6,155 H684.6 M686.4,155 H691.6" fill="none" stroke="#444444" stroke-width="1.5" />
<path d="M672.6,196.6 V183 H690.6 V199.6" fill="none" stroke="#666" stroke-width="1.4" stroke-dasharray="4.2 2.4"/>
<path d="M669.9,197.4 H674 L675.2,196.1 H679.2 L680.4,197.4 H684.4 V206.6 H669.9 Z" fill="#C8C6C4" stroke="#444444" stroke-width="1.5" stroke-linejoin="round"/>
<circle cx="677.2" cy="201.6" r="2.5" fill="#FAFAFA" stroke="#444444" stroke-width="1.4"/>
<path d="M686.6,203.5 H694.2 M690.4,199.7 V207.3" fill="none" stroke="#2E9B57" stroke-width="1.6" />
<rect x="931.40" y="142.80" width="12.90" height="42.00" fill="#C8C6C4" stroke="#7A7A7A" stroke-width="1.5" />
<rect x="944.30" y="158.20" width="10.80" height="26.60" fill="#FAFAFA" stroke="#444444" stroke-width="1.5" />
<path d="M961.00,149.50 A6.20,6.20 0 1 1 971.05,154.84 Q967.20,158.50 967.20,159.62 V161.74" fill="none" stroke="#1E8BCD" stroke-width="2.2"/><circle cx="967.20" cy="166.75" r="1.76" fill="#1E8BCD"/>
<rect x="1034.70" y="148.80" width="8.20" height="12.20" fill="#C8C6C4" stroke="#7A7A7A" stroke-width="1.4" />
<rect x="1051.40" y="142.20" width="7.20" height="18.80" fill="#83BEEC" stroke="#106EBE" stroke-width="1.5" />
<rect x="1042.90" y="137.80" width="8.50" height="23.20" fill="#FAFAFA" stroke="#444444" stroke-width="1.5" />
<path d="M1035.6,196.4 L1039.2,186.8 L1048.8,201.4 L1057.8,186.8" fill="none" stroke="#444444" stroke-width="1.5" stroke-linejoin="round"/>
<path d="M1035.8,204.6 L1050,183.4 L1058,196.6" fill="none" stroke="#1E8BCD" stroke-width="1.5" stroke-linejoin="round"/>
<rect x="1034.20" y="195.00" width="2.80" height="2.80" fill="#444444" />
<rect x="1037.80" y="185.40" width="2.80" height="2.80" fill="#444444" />
<rect x="1047.40" y="200.00" width="2.80" height="2.80" fill="#444444" />
<rect x="1056.40" y="185.40" width="2.80" height="2.80" fill="#444444" />
<rect x="1034.40" y="203.20" width="2.80" height="2.80" fill="#1E8BCD" />
<rect x="1048.60" y="182.00" width="2.80" height="2.80" fill="#1E8BCD" />
<rect x="1056.60" y="195.20" width="2.80" height="2.80" fill="#1E8BCD" />
<path d="M1049.2,229.1 A11.6,11.6 0 1 1 1035.7,242.1 H1049.2 Z" fill="#83BEEC" stroke="#106EBE" stroke-width="1.5" stroke-linejoin="round"/>
<path d="M1046.4,239.4 H1035.2 A11.2,11.2 0 0 1 1046.4,228.2 Z" fill="#C8C6C4" stroke="#7A7A7A" stroke-width="1.4" stroke-linejoin="round"/>
<rect x="1108.20" y="137.80" width="11.80" height="23.20" fill="#C8C6C4" stroke="#7A7A7A" stroke-width="1.5" />
<rect x="1120.00" y="137.80" width="12.00" height="13.60" fill="#FAFAFA" stroke="#444444" stroke-width="1.5" />
<rect x="1120.00" y="151.40" width="12.00" height="9.60" fill="#83BEEC" stroke="#106EBE" stroke-width="1.5" />
<path d="M1109.8,206.4 V192.6 H1114.6 V183.4 H1119.8 V189.4 H1124.6 V197.4 H1129 V206.4 Z M1114.6,192.6 V206.4 M1119.8,189.4 V206.4 M1124.6,197.4 V206.4" fill="#83BEEC" stroke="#106EBE" stroke-width="1.5" />
<path d="M1108.4,228.2 V252 H1132.6" fill="none" stroke="#444444" stroke-width="1.5" />
<rect x="1126.50" y="230.00" width="3.00" height="3.00" fill="#444444" />
<rect x="1112.10" y="245.30" width="3.00" height="3.00" fill="#444444" />
<rect x="1112.10" y="234.30" width="3.00" height="3.00" fill="#7DBDF0" />
<rect x="1118.70" y="239.10" width="3.00" height="3.00" fill="#7DBDF0" />
<rect x="1126.10" y="243.90" width="3.00" height="3.00" fill="#7DBDF0" />
<rect x="1181.40" y="147.40" width="3.20" height="13.40" fill="#C8C6C4" stroke="#7A7A7A" stroke-width="1.3" />
<rect x="1187.60" y="138.00" width="2.80" height="8.80" fill="#C8C6C4" stroke="#7A7A7A" stroke-width="1.3" />
<path d="M1184.6,147.2 H1190.4" fill="none" stroke="#7A7A7A" stroke-width="1.3" />
<rect x="1193.20" y="138.00" width="5.60" height="13.40" fill="#FAFAFA" stroke="#444444" stroke-width="1.5" />
<path d="M1190.4,138 H1193.2 M1198.8,151.4 H1201.4" fill="none" stroke="#444444" stroke-width="1.4" />
<rect x="1201.60" y="151.60" width="3.60" height="9.20" fill="#83BEEC" stroke="#106EBE" stroke-width="1.6" />
<rect x="1181.60" y="191.20" width="8.00" height="15.40" fill="#C8C6C4" stroke="#7A7A7A" stroke-width="1.4" />
<rect x="1197.40" y="200.80" width="7.60" height="5.80" fill="#83BEEC" stroke="#106EBE" stroke-width="1.5" />
<rect x="1189.60" y="196.00" width="7.80" height="10.60" fill="#FAFAFA" stroke="#444444" stroke-width="1.5" />
<path d="M1184.5,184.8 L1193.8,189.3 L1201.7,194.3" fill="none" stroke="#333" stroke-width="2" />
<rect x="1182.10" y="182.90" width="4.80" height="3.80" fill="#333" />
<rect x="1191.40" y="187.40" width="4.80" height="3.80" fill="#333" />
<rect x="1199.30" y="192.40" width="4.80" height="3.80" fill="#333" />
<circle cx="1280.7" cy="160.4" r="14.3" fill="#fff" stroke="#444444" stroke-width="1.5"/>
<clipPath id="gl"><circle cx="1280.7" cy="160.4" r="13.5"/></clipPath>
<g clip-path="url(#gl)" fill="#3A9450"><path d="M1267,156 C1269,153 1272,153.5 1274,154.5 L1273.5,151.5 L1276.5,152.5 L1276,156.5 C1274,158.5 1276,160.5 1274.5,162.5 C1272.5,162 1272,164.5 1269.5,164 C1267.5,161.5 1267,159 1267,156 Z"/><path d="M1279.5,148.5 L1283.5,146.5 L1282,150.5 C1286,148 1291,150 1294.5,154 C1296,158 1295.5,161 1294,164 C1292,161.5 1289,162 1286.5,160 C1283.5,158.5 1284.5,155 1282.5,154 C1280.5,153 1281.5,150.5 1279.5,148.5 Z"/><path d="M1277.5,166 C1281,163 1286,163.5 1289.5,166 C1289.5,170 1287,172.5 1284.5,174.5 C1282.5,172 1278.5,170.5 1277.5,166 Z"/></g>
<path d="M1281.2,140.9 A19.5,19.5 0 1 0 1295.6,173" fill="none" stroke="#444444" stroke-width="1.5" />
<path d="M1279.9,179.8 V184.5 M1266.2,184.6 H1293" fill="none" stroke="#444444" stroke-width="1.5" />
<rect x="1344.55" y="142.75" width="41.90" height="41.90" fill="#FAFAFA" stroke="#444444" stroke-width="1.5" /><rect x="1349.10" y="147.30" width="7.80" height="8.20" fill="#C8C6C4" stroke="#7A7A7A" stroke-width="1.2" /><rect x="1361.10" y="147.30" width="21.30" height="8.20" fill="#C8C6C4" stroke="#7A7A7A" stroke-width="1.2" /><rect x="1349.10" y="159.70" width="7.80" height="20.90" fill="#C8C6C4" stroke="#7A7A7A" stroke-width="1.2" />
<rect x="1364.80" y="166.50" width="27.40" height="24.00" fill="#fff" />
<rect x="1372.80" y="162.80" width="12.00" height="6.00" fill="#fff" />
<rect x="1366.40" y="175.40" width="8.20" height="12.60" fill="#C8C6C4" stroke="#7A7A7A" stroke-width="1.4" />
<rect x="1382.40" y="169.20" width="7.60" height="18.80" fill="#83BEEC" stroke="#106EBE" stroke-width="1.5" />
<rect x="1374.60" y="164.40" width="7.80" height="23.60" fill="#FAFAFA" stroke="#444444" stroke-width="1.5" />
<path d="M1452.8,161.4 L1461,158.2 L1469,161 V182.8 L1461,185.4 L1452.8,182.4 Z" fill="#FAFAFA" stroke="#444444" stroke-width="1.5" stroke-linejoin="round"/>
<path d="M1461,158.2 L1469,161 V182.8 L1461,185.4 Z" fill="#C8C6C4" stroke="#7A7A7A" stroke-width="1.3" stroke-linejoin="round"/>
<path d="M1452.8,161.4 L1461,158.2 L1469,161 V182.8 L1461,185.4 L1452.8,182.4 Z" fill="none" stroke="#444444" stroke-width="1.5" stroke-linejoin="round"/>
<path d="M1468.8,146.4 L1476.2,142.8 V172 L1468.8,183 Z" fill="#FAFAFA" stroke="#444444" stroke-width="1.5" stroke-linejoin="round"/>
<path d="M1476.2,142.8 L1485.4,145.4 V166 L1476.2,170 Z" fill="#83BEEC" stroke="#106EBE" stroke-width="1.5" stroke-linejoin="round"/>
<path d="M1468.8,183 L1476,185" fill="none" stroke="#444444" stroke-width="1.5" />
<circle cx="1487.4" cy="176.8" r="12.8" fill="#fff"/>
<circle cx="1487.4" cy="176.8" r="11" fill="#FAFAFA" stroke="#1E8BCD" stroke-width="1.6"/>
<path d="M1487.4,165.8 V187.8 M1476.6,176.8 H1498.4 M1477.8,171.9 H1497 M1477.8,181.8 H1497" fill="none" stroke="#1E8BCD" stroke-width="1.5" />
<ellipse cx="1487.4" cy="176.8" rx="4.5" ry="11" fill="none" stroke="#1E8BCD" stroke-width="1.5"/>
<path d="M1555,151.9 H1599 M1555,175.3 H1599 M1562.2,145 V182" fill="none" stroke="#444444" stroke-width="1.5" />
<path d="M1647.3,151.9 H1691.3 M1647.3,175.3 H1691.3 M1654.5,145 V182" fill="none" stroke="#444444" stroke-width="1.5" />
<path d="M1738,151.9 H1782 M1738,175.3 H1782 M1745.2,145 V182" fill="none" stroke="#444444" stroke-width="1.5" />
<path d="M1563,163.6 L1568.5,170.6 L1576.3,158.6 L1583.8,170.4 L1593.5,156.6 L1598.6,164.6" fill="none" stroke="#1E8BCD" stroke-width="1.5" />
<rect x="1659.00" y="162.80" width="5.20" height="9.80" fill="#83BEEC" stroke="#1E8BCD" stroke-width="1.3" />
<rect x="1668.40" y="156.50" width="5.20" height="16.10" fill="#83BEEC" stroke="#1E8BCD" stroke-width="1.3" />
<rect x="1677.90" y="159.80" width="5.20" height="12.80" fill="#83BEEC" stroke="#1E8BCD" stroke-width="1.3" />
<rect x="1749.80" y="156.70" width="3.40" height="6.10" fill="#83BEEC" stroke="#106EBE" stroke-width="1.6" />
<rect x="1756.00" y="156.70" width="3.40" height="6.10" fill="#83BEEC" stroke="#106EBE" stroke-width="1.6" />
<rect x="1774.80" y="156.70" width="3.40" height="6.10" fill="#83BEEC" stroke="#106EBE" stroke-width="1.6" />
<rect x="1762.40" y="165.20" width="3.40" height="5.60" fill="none" stroke="#555" stroke-width="1.6" />
<rect x="1768.70" y="165.20" width="3.40" height="5.60" fill="none" stroke="#555" stroke-width="1.6" />
<rect x="1850.20" y="142.80" width="42.40" height="42.00" fill="#FAFAFA" />
<path d="M1892.6,163.4 V142.8 H1850.2 V184.8 H1879.2" fill="none" stroke="#444444" stroke-width="1.5" />
<rect x="1850.20" y="142.80" width="42.40" height="5.60" fill="#C8C6C4" stroke="#444444" stroke-width="1.5" />
<rect x="1856.60" y="155.20" width="29.80" height="8.00" fill="#83BEEC" stroke="#106EBE" stroke-width="1.6" />
<rect x="1856.60" y="169.60" width="20.00" height="7.80" fill="#C8C6C4" stroke="#7A7A7A" stroke-width="1.3" />
<path d="M1873.8,165.8 H1895.8 V168.8 L1888.2,177.6 V188 H1881.6 V177.6 L1873.8,168.8 Z" fill="#fff" stroke="#fff" stroke-width="4.6" />
<path d="M1873.8,165.8 H1895.8 V168.8 L1888.2,177.6 V188 H1881.6 V177.6 L1873.8,168.8 Z" fill="#FAFAFA" stroke="#444444" stroke-width="1.5" stroke-linejoin="round"/>
<rect x="1938.80" y="150.60" width="42.80" height="27.00" fill="#FAFAFA" />
<path d="M1981.6,163.4 V150.6 H1938.8 V177.6 H1967.6" fill="none" stroke="#444444" stroke-width="1.5" />
<rect x="1938.80" y="150.60" width="42.80" height="6.00" fill="#C8C6C4" stroke="#444444" stroke-width="1.5" />
<rect x="1943.20" y="162.80" width="8.40" height="8.00" fill="#C8C6C4" stroke="#7A7A7A" stroke-width="1.3" />
<rect x="1955.80" y="162.80" width="8.40" height="8.00" fill="#C8C6C4" stroke="#7A7A7A" stroke-width="1.3" />
<path d="M1968,162.7 H1976.6" fill="none" stroke="#8a8a8a" stroke-width="2" />
<path d="M1962.4,165.8 H1984.6 V168.8 L1976.8,177.6 V188 H1970.2 V177.6 L1962.4,168.8 Z" fill="#fff" stroke="#fff" stroke-width="4.6" />
<path d="M1962.4,165.8 H1984.6 V168.8 L1976.8,177.6 V188 H1970.2 V177.6 L1962.4,168.8 Z" fill="#FAFAFA" stroke="#444444" stroke-width="1.5" stroke-linejoin="round"/>
<path d="M2063.6,167.6 H2070.7 A9.5,9.5 0 0 0 2070.7,148.6 H2058.1 A9.5,9.5 0 0 0 2056.6,167.5" fill="none" stroke="#444444" stroke-width="1.5" />
<path d="M2075.6,159.4 H2068.9 A9.55,9.55 0 0 0 2068.9,178.5 H2081.8 A9.55,9.55 0 0 0 2083.4,159.5" fill="none" stroke="#444444" stroke-width="1.5" />
<path d="M2173,143.9 H2204 V171.9 H2176.8 L2165.6,182.6 V171.9 H2161.4 V153.5" fill="#FAFAFA" />
<path d="M2174,143.9 H2204 V171.9 H2176.8 L2165.6,182.6 V171.9 H2161.4 V154.5" fill="none" stroke="#444444" stroke-width="1.5" />
<path d="M2157.5,150.6 H2181.4 M2169.4,138.6 V162.5" fill="none" stroke="#2E9B57" stroke-width="1.7" />
<path d="M2268.8,166.4 L2301.2,140.6 L2294.6,181.2 M2280.6,158.8 L2297.2,166.6" fill="none" stroke="#2B88D8" stroke-width="4" stroke-linejoin="bevel"/>
<path d="M2369.4,178.4 H2381.2 C2374.6,172.6 2371,166.6 2371,159.6 C2371,149.6 2378,143.2 2387.3,143.2 C2396.6,143.2 2403.6,149.6 2403.6,159.6 C2403.6,166.6 2400,172.6 2393.4,178.4 H2405.4" fill="none" stroke="#333" stroke-width="2" />
<circle cx="1778.4" cy="273.4" r="15.4" fill="#127E43"/>
<path d="M1778,273.47 H1953.55 V347" fill="none" stroke="#127E43" stroke-width="3"/>
<rect x="1684.50" y="346.40" width="458.30" height="158.20" fill="#B6E0CB" stroke="#0F7C40" stroke-width="3" rx="11.7" />
<text x="1707.3" y="391.6" font-size="25" fill="#127D43" textLength="190.9" lengthAdjust="spacingAndGlyphs" font-weight="bold" stroke="#127D43" stroke-width="0.5">Міні-діаграма.</text>
<text x="1907.7" y="391.6" font-size="25" fill="#127D43" textLength="172.5" lengthAdjust="spacingAndGlyphs" >Являє собою</text>
<text x="1707.3" y="423.8" font-size="25" fill="#127D43" textLength="422.1" lengthAdjust="spacingAndGlyphs" >невелику діаграму, відібражену</text>
<text x="1707.3" y="455.4" font-size="25" fill="#127D43" textLength="425.0" lengthAdjust="spacingAndGlyphs" >в одній клітинці, безпосередньо</text>
<text x="1707.3" y="487.9" font-size="25" fill="#127D43" textLength="211.6" lengthAdjust="spacingAndGlyphs" >поруч з даними.</text>
</svg>
<div class="a" style="left:1244px;top:874.5px;width:553.2px;height:310px;box-sizing:border-box;border:1.3px solid #949494;border-radius:11px;background:#F0F0F0;overflow:hidden;box-shadow:0 24px 52px rgba(0,0,0,.27),0 3px 18px rgba(0,0,0,.14)"><div class="a" style="left:0;top:0;width:100%;height:43.5px;background:#F3F5F9"></div></div>
<svg width="2560" height="1270" viewBox="0 0 2560 1270"><text x="1255.4" y="903.9" font-size="19" fill="#1b1b1b" textLength="201.9" lengthAdjust="spacingAndGlyphs" >Створення міні-діаграм</text>
<text x="1684.7" y="902.5" font-size="17" fill="#1b1b1b" textLength="7.3" lengthAdjust="spacingAndGlyphs" >?</text>
<path d="M1753.8,890.6 L1766.4,903.2 M1766.4,890.6 L1753.8,903.2" stroke="#1b1b1b" stroke-width="1.4" fill="none"/>
<text x="1255.4" y="949.6" font-size="17.5" fill="#1b1b1b" textLength="174.4" lengthAdjust="spacingAndGlyphs" >Виберіть потрібні дані</text>
<line x1="1438.00" y1="942.30" x2="1787.00" y2="942.30" stroke="#DDDDDD" stroke-width="1.2" />
<text x="1269.4" y="987.6" font-size="17.5" fill="#1b1b1b" textLength="125.1" lengthAdjust="spacingAndGlyphs" >Діапазон даних:</text>
<line x1="1285.50" y1="990.50" x2="1294.20" y2="990.50" stroke="#1b1b1b" stroke-width="1" />
<rect x="1409.40" y="965.70" width="378.00" height="28.40" fill="#fff" stroke="#C9C9C9" stroke-width="1" />
<rect x="1760.50" y="966.20" width="26.40" height="27.40" fill="#FAFAFA" stroke="#DADADA" stroke-width="1" />
<text x="1411.9" y="987.6" font-size="17.5" fill="#1b1b1b" textLength="36.5" lengthAdjust="spacingAndGlyphs" >C8:I8</text>
<line x1="1449.30" y1="969.00" x2="1449.30" y2="991.00" stroke="#000" stroke-width="1.2" />
<text x="1255.4" y="1049.9" font-size="17.5" fill="#1b1b1b" textLength="259.6" lengthAdjust="spacingAndGlyphs" >Вибір розташування міні-діаграм</text>
<line x1="1523.00" y1="1042.50" x2="1787.00" y2="1042.50" stroke="#DDDDDD" stroke-width="1.2" />
<text x="1269.4" y="1087.9" font-size="17.5" fill="#1b1b1b" textLength="190.3" lengthAdjust="spacingAndGlyphs" >Діапазон розташування:</text>
<rect x="1475.80" y="1066.50" width="311.60" height="28.40" fill="#fff" stroke="#C9C9C9" stroke-width="1" />
<rect x="1760.50" y="1067.00" width="26.40" height="27.40" fill="#FAFAFA" stroke="#DADADA" stroke-width="1" />
<text x="1478.3" y="1087.9" font-size="17.5" fill="#1b1b1b" textLength="32.9" lengthAdjust="spacingAndGlyphs" >$J$8</text>
<g transform="translate(0,0)"><path d="M1773.5,986.5 V971 M1766.3,977.6 L1773.5,970 L1780.7,977.6" fill="none" stroke="#111" stroke-width="3.2"/><path d="M1767,990.5 H1780" stroke="#111" stroke-width="1"/></g>
<g transform="translate(0,100.8)"><path d="M1773.5,986.5 V971 M1766.3,977.6 L1773.5,970 L1780.7,977.6" fill="none" stroke="#111" stroke-width="3.2"/><path d="M1767,990.5 H1780" stroke="#111" stroke-width="1"/></g>
<rect x="1558.30" y="1132.90" width="105.60" height="38.40" fill="#F4F8FC" stroke="#4A9BDE" stroke-width="1.3" rx="4" />
<text x="1599.5" y="1158.8" font-size="17.5" fill="#1b1b1b" textLength="21.8" lengthAdjust="spacingAndGlyphs" >OK</text>
<rect x="1680.80" y="1132.70" width="105.40" height="38.80" fill="#FBFBFB" stroke="#D4D4D4" stroke-width="1" rx="4" />
<text x="1694.6" y="1158.8" font-size="17.5" fill="#1b1b1b" textLength="76.9" lengthAdjust="spacingAndGlyphs" >Скасувати</text>
<rect x="1790.80" y="1170.80" width="2.40" height="2.40" fill="#BDBDBD" />
<rect x="1790.80" y="1175.30" width="2.40" height="2.40" fill="#BDBDBD" />
<rect x="1790.80" y="1179.80" width="2.40" height="2.40" fill="#BDBDBD" />
<rect x="1786.30" y="1175.30" width="2.40" height="2.40" fill="#BDBDBD" />
<rect x="1786.30" y="1179.80" width="2.40" height="2.40" fill="#BDBDBD" />
<rect x="1781.80" y="1179.80" width="2.40" height="2.40" fill="#BDBDBD" /></svg>
<div id="frame"></div>
</div>
</body></html>
